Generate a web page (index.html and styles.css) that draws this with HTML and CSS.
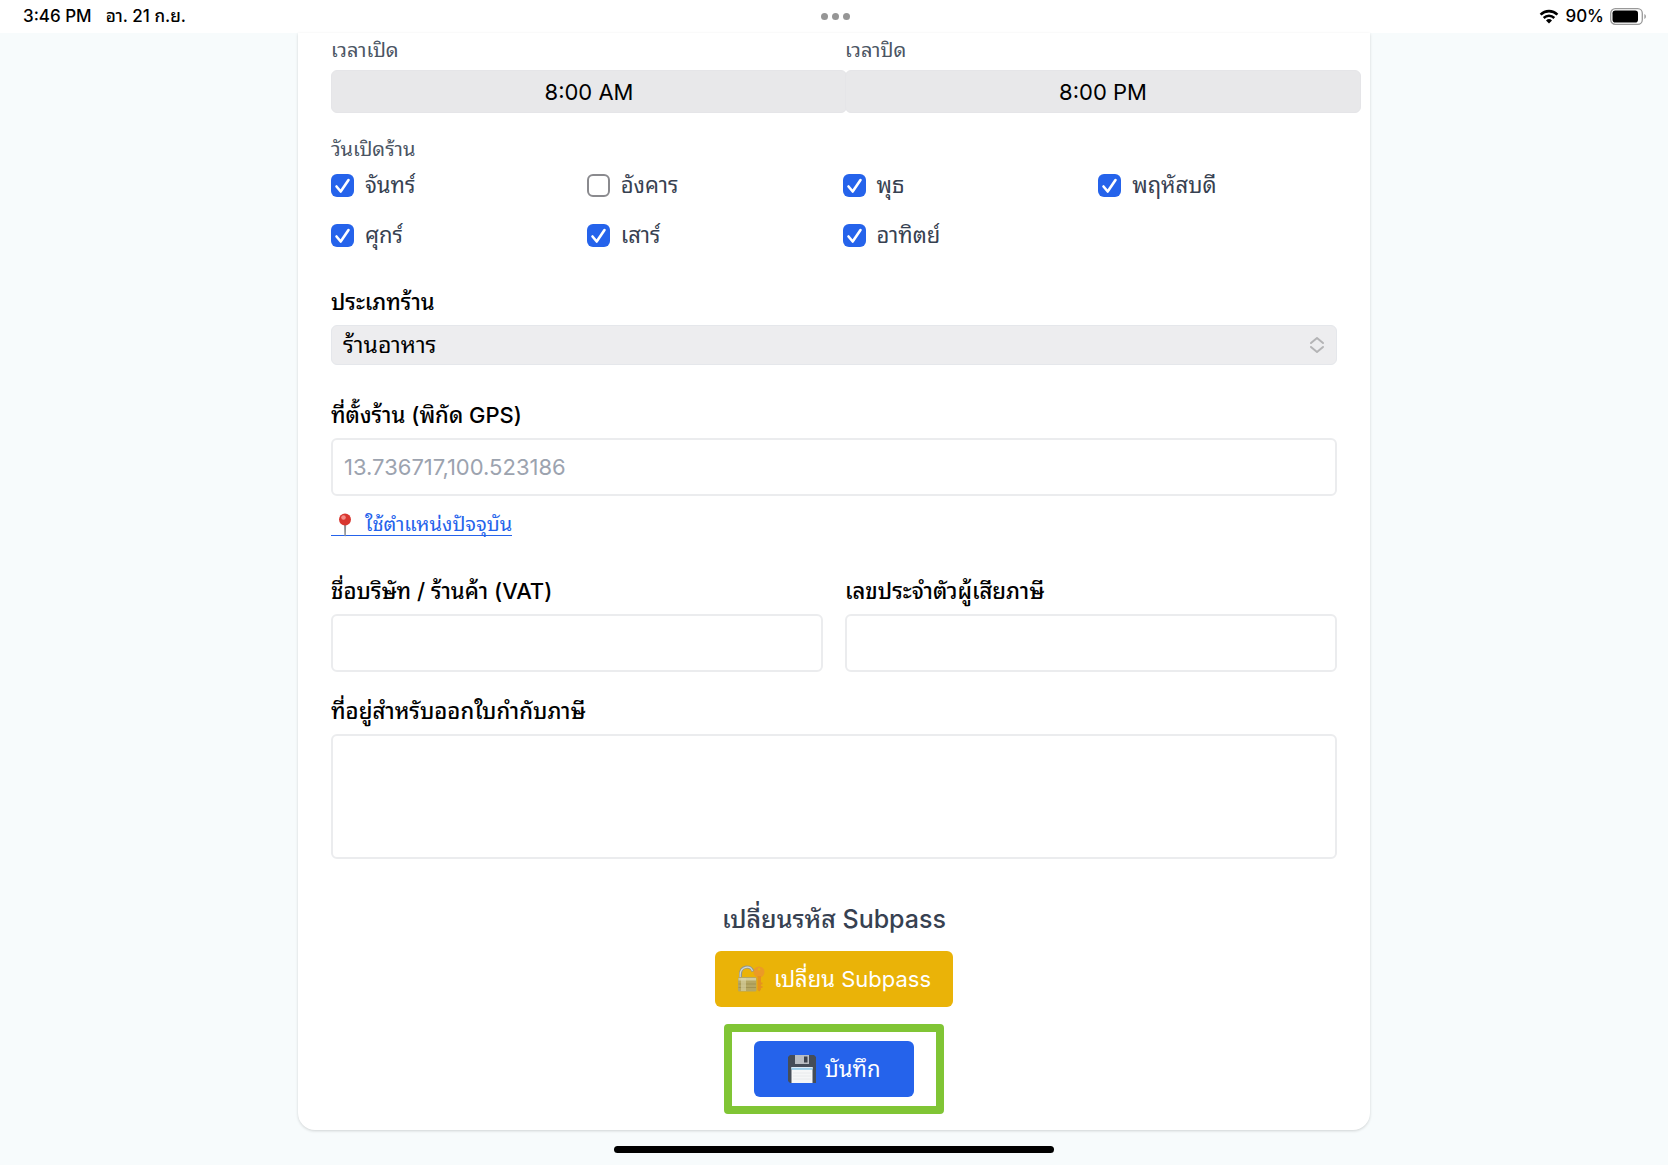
FILE: index.html
```html
<!DOCTYPE html>
<html lang="th">
<head>
  <meta charset="UTF-8" />
  <meta name="viewport" content="width=device-width, initial-scale=1" />
  <title>ข้อมูลร้าน</title>
  <link rel="stylesheet" href="styles.css">
</head>
<body>
  <header class="status-bar">
    <div class="status-left">
      <span>3:46 PM</span>
      <span>อา. 21 ก.ย.</span>
    </div>
    <div class="status-dots"><i></i><i></i><i></i></div>
    <div class="status-right">
      <svg class="wifi" viewBox="0 0 20 15" aria-hidden="true">
        <path d="M1.6 5.6a12 12 0 0 1 16.8 0" fill="none" stroke="#000" stroke-width="2.6"/>
        <path d="M4.7 9a7.6 7.6 0 0 1 10.6 0" fill="none" stroke="#000" stroke-width="2.5"/>
        <path d="M7 11.4a4.4 4.4 0 0 1 6 0L10 14.5z"/>
      </svg>
      <span>90%</span>
      <svg class="battery" viewBox="0 0 37 17" aria-hidden="true">
        <rect x="0.7" y="0.7" width="31.6" height="15.6" rx="4.6" fill="none" stroke="#999" stroke-width="1.3"/>
        <rect x="2.5" y="2.5" width="25.5" height="12" rx="2.8"/>
        <path d="M34.4 6v5c2-.9 2-4.1 0-5z" fill="#999"/>
      </svg>
    </div>
  </header>

  <form class="card">
    <div class="two-cols times">
      <div>
        <label class="small-label" for="openTime">เวลาเปิด</label>
        <input class="time" type="text" id="openTime" value="8:00 AM">
      </div>
      <div>
        <label class="small-label" for="closeTime">เวลาปิด</label>
        <input class="time" type="text" id="closeTime" value="8:00 PM">
      </div>
    </div>

    <div class="small-label">วันเปิดร้าน</div>
    <div class="days">
      <label><input type="checkbox" checked> จันทร์</label>
      <label><input type="checkbox"> อังคาร</label>
      <label><input type="checkbox" checked> พุธ</label>
      <label><input type="checkbox" checked> พฤหัสบดี</label>
      <label><input type="checkbox" checked> ศุกร์</label>
      <label><input type="checkbox" checked> เสาร์</label>
      <label><input type="checkbox" checked> อาทิตย์</label>
    </div>

    <div class="field">
      <label class="label" for="shopType">ประเภทร้าน</label>
      <div class="select-wrap">
        <select id="shopType">
          <option>ร้านอาหาร</option>
        </select>
        <svg class="chevrons" viewBox="0 0 16 18" aria-hidden="true">
          <path d="M2 7l6-5 6 5M2 11l6 5 6-5" fill="none" stroke="#b4b4b6" stroke-width="2" stroke-linecap="round" stroke-linejoin="round"/>
        </svg>
      </div>
    </div>

    <div class="field">
      <label class="label" for="gps">ที่ตั้งร้าน (พิกัด GPS)</label>
      <input class="box" type="text" id="gps" placeholder="13.736717,100.523186">
      <a class="locate" href="#">
        <svg class="pin" viewBox="0 0 14 24" aria-hidden="true">
          <path d="M6 11h2.200l-.4 11.500-.7 1-.7-1z" fill="#8b8f94"/>
          <circle cx="7" cy="6.500" r="6" fill="#d8362f"/>
          <circle cx="5.500" cy="4.500" r="2.300" fill="#f58b86"/>
        </svg>
        <span>ใช้ตำแหน่งปัจจุบัน</span>
      </a>
    </div>

    <div class="two-cols vat">
      <div>
        <label class="label" for="company">ชื่อบริษัท / ร้านค้า (VAT)</label>
        <input class="box" type="text" id="company">
      </div>
      <div>
        <label class="label" for="taxId">เลขประจำตัวผู้เสียภาษี</label>
        <input class="box" type="text" id="taxId">
      </div>
    </div>

    <label class="label" for="address">ที่อยู่สำหรับออกใบกำกับภาษี</label>
    <textarea class="box" id="address"></textarea>

    <div class="actions">
      <h2>เปลี่ยนรหัส Subpass</h2>
      <button class="btn btn-yellow" type="button">
        <svg class="emoji" viewBox="0 0 28 28" aria-hidden="true">
          <path d="M3.5 14V9.500C3.500 0 14 0 16 6.500" fill="none" stroke="#8f9690" stroke-width="3"/>
          <path d="M3.200 14V9.500C3.500 1 13.500 0 15.500 6" fill="none" stroke="#d4d8d0" stroke-width="1.200"/>
          <rect x="1" y="12" width="18.500" height="14.500" rx="1.500" fill="#b5a763"/>
          <path d="M1.500 13h17.500v2.500h-17.500z" fill="#d3cc9c"/>
          <path d="M1.500 19h17.500M1.500 22.500h17.500" stroke="#948648" stroke-width=".6"/>
          <path d="M4 13h5v13H4z" fill="#dcd6a8" opacity=".6"/>
          <circle cx="22" cy="7" r="5.500" fill="#eb9a26"/>
          <path d="M20.500 11h3.500v13.500l-1.700 2-1.800-1.500z" fill="#e5921f"/>
          <path d="M23.500 17.500h2v2h-2zM23.500 21h2v2h-2z" fill="#e5921f"/>
          <circle cx="22" cy="4.200" r="1.300" fill="#eab308"/>
        </svg>
        <span>เปลี่ยน Subpass</span>
      </button>
      <div class="highlight">
        <button class="btn btn-blue" type="submit">
          <svg class="emoji" viewBox="0 0 28 28" aria-hidden="true">
            <path d="M2 0h24l2 2v26H2l-2-2V2z" fill="#454d58"/>
            <path d="M7 0h14v9H7z" fill="#b9bec4"/>
            <path d="M16 1.500h3.500v6H16z" fill="#3c434d"/>
            <path d="M3.500 12h21v16h-21z" fill="#f5f6f7"/>
            <path d="M3.500 12h21v2h-21z" fill="#dcecf8"/>
            <path d="M3.500 14h21" stroke="#5bb0e0"/>
            <path d="M5 18h18M5 21h18M5 24h18" stroke="#e8eaec"/>
          </svg>
          <span>บันทึก</span>
        </button>
      </div>
    </div>
  </form>

  <div class="home-indicator"></div>
</body>
</html>
```

FILE: styles.css
```css
* {
  box-sizing: border-box;
}

body {
  margin: 0;
  background: #f7fbfc;
  color: #000;
  font-family: Inter, Thonburi, "Noto Sans Thai Looped", "Noto Looped Thai", Loma, Garuda, Waree, "Noto Sans", sans-serif;
  font-size: 22px;
  line-height: 33px;
}

input, select, textarea, button {
  font: inherit;
  color: inherit;
}

/* status bar */
.status-bar {
  display: grid;
  grid-template-columns: 1fr auto 1fr;
  align-items: center;
  height: 33px;
  padding: 0 21px 0 23px;
  background: #fff;
  font-size: 17px;
  font-weight: 500;
}

.status-left {
  display: flex;
  gap: 14px;
}

.status-dots {
  display: flex;
  gap: 4px;
}

.status-dots i {
  width: 7px;
  height: 7px;
  border-radius: 50%;
  background: #969696;
}

.status-right {
  display: flex;
  align-items: center;
  justify-content: flex-end;
  gap: 6px;
}

.wifi {
  width: 20px;
  height: 15px;
}

.battery {
  width: 37px;
  height: 17px;
}

/* form */
.card {
  width: 1072px;
  max-width: 100%;
  margin: 0 auto;
  padding: 3px 33px 16px;
  background: #fff;
  border-radius: 0 0 17px 17px;
  box-shadow: 0 1px 3px rgba(0, 0, 0, 0.16);
}

.two-cols {
  display: grid;
  grid-template-columns: 1fr 1fr;
  gap: 22px;
}

.times {
  margin-bottom: 22px;
}

.small-label {
  display: block;
  margin-bottom: 6px;
  color: #4b5563;
  font-size: 20px;
  line-height: 28px;
}

.time {
  display: block;
  box-sizing: content-box;
  width: 100%;
  height: 41px;
  padding: 0 11px;
  border: 1px solid #e5e5e8;
  border-radius: 6px;
  background: #e8e8ea;
  text-align: center;
}

.days {
  display: grid;
  grid-template-columns: repeat(4, 1fr);
  gap: 17px;
  margin-bottom: 34px;
  color: #374151;
}

.days label {
  display: flex;
  align-items: center;
  gap: 11px;
}

.days input {
  appearance: none;
  width: 23px;
  height: 23px;
  margin: 0;
  border: 2px solid #8a8a8e;
  border-radius: 6px;
  background: #fff;
}

.days input:checked {
  border: 0;
  background: #2563eb url("data:image/svg+xml,%3Csvg xmlns='http://www.w3.org/2000/svg' viewBox='0 0 23 23'%3E%3Cpath d='M5.500 12.500l4.200 5L17.500 6' fill='none' stroke='white' stroke-width='2.600' stroke-linecap='round' stroke-linejoin='round'/%3E%3C/svg%3E");
}

.field {
  margin-bottom: 34px;
}

.label {
  display: block;
  margin-bottom: 6px;
  font-weight: 500;
}

.select-wrap {
  position: relative;
}

select {
  appearance: none;
  display: block;
  width: 100%;
  height: 40px;
  padding: 0 11px;
  border: 1px solid #e5e7eb;
  border-radius: 6px;
  background: #ededef;
  font-size: 23px;
}

.chevrons {
  position: absolute;
  top: 11px;
  right: 12px;
  width: 16px;
  height: 18px;
  pointer-events: none;
}

.box {
  display: block;
  width: 100%;
  height: 58px;
  padding: 0 11px;
  border: 2px solid #ebecee;
  border-radius: 6px;
  background: #fff;
}

.box::placeholder {
  color: #9ca3af;
  opacity: 1;
}

textarea.box {
  height: 125px;
  padding: 12px;
  resize: none;
}

.locate {
  display: flex;
  align-items: center;
  gap: 13px;
  width: fit-content;
  height: 22px;
  margin-top: 18px;
  padding-left: 7px;
  border-bottom: 1px solid #2563eb;
  color: #2563eb;
  font-size: 20px;
  text-decoration: none;
}

.pin {
  width: 14px;
  height: 24px;
}

.vat {
  margin-top: 39px;
  margin-bottom: 23px;
}

.actions {
  display: flex;
  flex-direction: column;
  align-items: center;
  margin-top: 41px;
}

h2 {
  margin: 0 0 12px;
  color: #374151;
  font-size: 25px;
  font-weight: 500;
  line-height: 39px;
}

.btn {
  display: flex;
  align-items: center;
  justify-content: center;
  gap: 9px;
  height: 56px;
  border: 0;
  border-radius: 6px;
  color: #fff;
  cursor: pointer;
}

.btn-yellow {
  padding: 0 22px;
  background: #eab308;
}

.btn-blue {
  padding: 0 34px;
  background: #2563eb;
}

.emoji {
  width: 28px;
  height: 28px;
}

.highlight {
  margin-top: 17px;
  padding: 9px 22px;
  border: 8px solid #80c535;
  border-radius: 4px;
}

.home-indicator {
  width: 440px;
  height: 7px;
  margin: 16px auto 11px;
  border-radius: 4px;
  background: #000;
}
```
